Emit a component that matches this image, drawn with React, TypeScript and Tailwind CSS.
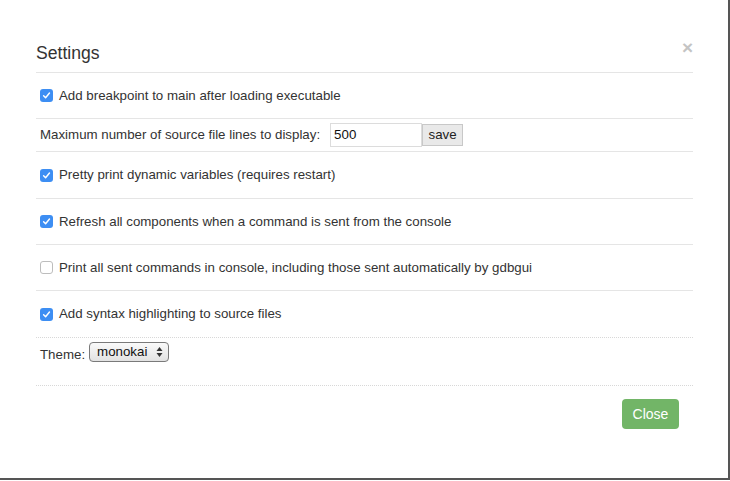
import React from 'react';

const Check: React.FC<{ checked: boolean }> = ({ checked }) =>
  checked ? (
    <span className="flex h-[13px] w-[13px] shrink-0 items-center justify-center rounded-[3px] bg-[#3d8ef3]">
      <svg width="9" height="9" viewBox="0 0 10 10" fill="none">
        <path d="M1.8 5.3 L4 7.5 L8.3 2.3" stroke="white" strokeWidth="1.6" strokeLinecap="round" strokeLinejoin="round" />
      </svg>
    </span>
  ) : (
    <span className="h-[13px] w-[13px] shrink-0 rounded-[3px] border border-[#bdbdbd] bg-white" />
  );

const CheckRow: React.FC<{ checked: boolean; label: string; tall?: boolean; dotted?: boolean }> = ({ checked, label, tall, dotted }) => (
  <div
    className={`flex items-center gap-[6px] pl-[4px] border-b ${tall ? 'h-[47px]' : 'h-[46px]'} ${dotted ? 'border-dotted border-[#d8d8d8]' : 'border-[#e5e5e5]'}`}
  >
    <Check checked={checked} />
    <span>{label}</span>
  </div>
);

export default function App() {
  return (
    <div className="h-[481px] w-[730px] bg-white" style={{ fontFamily: '"Liberation Sans", Arial, sans-serif' }}>
      <div className="relative h-[480px] w-[730px] border-b-2 border-r-2 border-[#555] text-[13.3px] text-[#333]">
        <div className="flex w-[693px] flex-col pl-[36px]">
          <div className="flex h-[73px] items-end border-b border-[#e5e5e5] pb-[9px]">
            <h1 className="text-[17.6px] font-normal leading-none text-[#333]">Settings</h1>
          </div>
          <span className="absolute left-[682px] top-[34px] text-[19px] font-bold text-[#c4c4c4]">×</span>

          <CheckRow checked label="Add breakpoint to main after loading executable" />

          <div className="flex h-[33px] items-center border-b border-[#e5e5e5] pl-[4px]">
            <span>Maximum number of source file lines to display:</span>
            <div className="ml-[10px] flex items-center">
              <div className="flex h-[24px] w-[92px] items-center border border-[#dcdcdc] px-[3px] text-[#111]">500</div>
              <div className="flex h-[22px] w-[41px] items-center justify-center border border-[#c8c8c8] bg-[#e9e9e9] text-[#222]">save</div>
            </div>
          </div>

          <CheckRow checked tall label="Pretty print dynamic variables (requires restart)" />
          <CheckRow checked label="Refresh all components when a command is sent from the console" />
          <CheckRow checked={false} label="Print all sent commands in console, including those sent automatically by gdbgui" />
          <CheckRow checked tall dotted label="Add syntax highlighting to source files" />

          <div className="flex h-[48px] items-start border-b border-dotted border-[#d8d8d8] pl-[4px] pt-[4px]">
            <span className="mt-[3px]">Theme:</span>
            <div className="ml-[4px] flex h-[20px] w-[80px] items-center justify-between rounded-[4px] border border-[#7a7a7a] bg-gradient-to-b from-[#fafafa] to-[#e2e2e2] pl-[7px] pr-[5px] text-[#111]">
              <span>monokai</span>
              <svg width="7" height="12" viewBox="0 0 7 12">
                <path d="M3.5 1 L6.5 5 H0.5 Z" fill="#333" />
                <path d="M3.5 11 L6.5 7 H0.5 Z" fill="#333" />
              </svg>
            </div>
          </div>

          <div className="flex justify-end pr-[14px] pt-[13px]">
            <button className="h-[30px] w-[57px] rounded-[4px] bg-[#72b567] text-[14px] text-white">Close</button>
          </div>
        </div>
      </div>
    </div>
  );
}
